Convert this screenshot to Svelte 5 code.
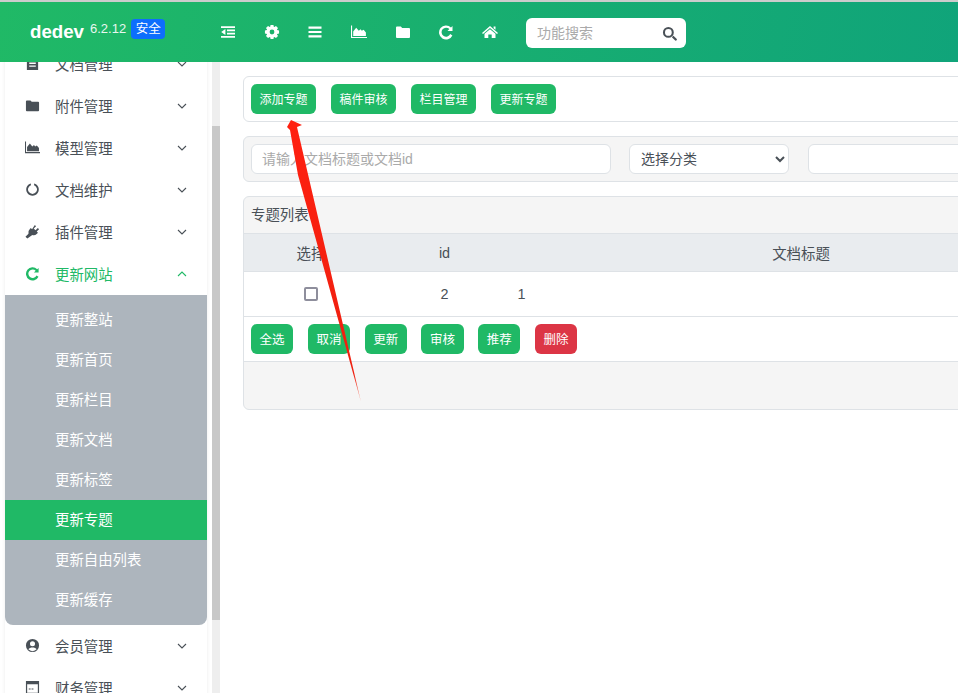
<script>
	const icons = {
		indent: 'M1 2.2h14v1.9H1z M7 5.6h8v1.6H7z M7 8.8h8v1.6H7z M1 11.9h14v1.9H1z M5.4 5v6L1.2 8z',
		cog: gear(),
		bars: 'M1.5 2.5h13v2.2h-13z M1.5 6.9h13v2.2h-13z M1.5 11.3h13v2.2h-13z',
		area: 'M0 1.5h1.1v11.4H16V14H0z M2.2 12V7.4l3-3.6 2.6 3 1.8-1.6 1.2 1.6 1.8-1 2.3 2.8V12z',
		folder: 'M1 3.6a1 1 0 0 1 1-1h3.8l1.4 1.5H14a1 1 0 0 1 1 1V13a1 1 0 0 1-1 1H2a1 1 0 0 1-1-1z',
		repeat: 'M14.5 2v5h-5l1.9-1.9A4.5 4.5 0 1 0 12.2 10l2.2 1.4A7 7 0 1 1 13 3.5z',
		home: 'M8 2 16 9l-1 1-7-6-7 6-1-1z M8 5.2l5.5 4.6V14H9.7v-3.4H6.3V14H2.5V9.8z M11.6 2.6h1.9v3.2l-1.9-1.6z',
		search: 'M6.8 1a5.8 5.8 0 1 1 0 11.6a5.8 5.8 0 1 1 0-11.6z M6.8 3.2a3.6 3.6 0 1 0 0 7.2a3.6 3.6 0 1 0 0-7.2z M10.5 12l1.7-1.7 3.3 3.3a1.2 1.2 0 0 1-1.7 1.7z',
		file: 'M2 1h12v14H2z M4.5 4v1.5h7V4z M4.5 7v1.5h7V7z M4.5 10v1.5h7V10z',
		notch: 'M6.3 1.5v1.9a4.8 4.8 0 1 0 3.4 0V1.5a6.7 6.7 0 1 1-3.4 0z',
		plug: 'M10.5 1l1.3 1.3-2.5 2.5 1.9 1.9 2.5-2.5 1.3 1.3-2.5 2.5 1.3 1.3-1 1q-2.5 2.5-5 1.5L2.5 15.5l-2-2 3.2-3.2q-1-2.5 1.5-5l1-1 1.3 1.3z',
		user: 'M8 1a7 7 0 1 1 0 14a7 7 0 1 1 0-14z M8 3.4a2.7 2.7 0 1 0 0 5.4a2.7 2.7 0 1 0 0-5.4z M3.6 12.1a6 6 0 0 0 8.8 0C11.6 10.6 10 10 8 10s-3.6.6-4.4 2.1z',
		card: 'M1 1h14v14H1z M2.3 4.6v9.1h11.4V4.6z M4 9h2v1.2H4z M7 9h2v1.2H7z'
	};

	const toolbar = ['indent', 'cog', 'bars', 'area', 'folder', 'repeat', 'home'];

	const menuTop = [
		{ icon: 'file', label: '文档管理' },
		{ icon: 'folder', label: '附件管理' },
		{ icon: 'area', label: '模型管理' },
		{ icon: 'notch', label: '文档维护' },
		{ icon: 'plug', label: '插件管理' }
	];
	const subMenu = ['更新整站', '更新首页', '更新栏目', '更新文档', '更新标签', '更新专题', '更新自由列表', '更新缓存'];
	const menuBottom = [
		{ icon: 'user', label: '会员管理' },
		{ icon: 'card', label: '财务管理' }
	];

	const topButtons = ['添加专题', '稿件审核', '栏目管理', '更新专题'];
	const rowButtons = ['全选', '取消', '更新', '审核', '推荐'];

	// gear outline with 8 teeth, plus the hole
	function gear() {
		let pts = [];
		for (let i = 0; i < 8; i++) {
			const a = (i * Math.PI) / 4;
			for (const [r, d] of [[5.4, -0.36], [7.2, -0.2], [7.2, 0.2], [5.4, 0.36]]) {
				pts.push((8 + r * Math.sin(a + d)).toFixed(2) + ' ' + (8 - r * Math.cos(a + d)).toFixed(2));
			}
		}
		return 'M' + pts.join('L') + 'z M8 5.6a2.4 2.4 0 1 0 0 4.8a2.4 2.4 0 1 0 0-4.8z';
	}
</script>

{#snippet icon(name)}
	<svg class="icon" viewBox="0 0 16 16"><path fill-rule="evenodd" d={icons[name]} /></svg>
{/snippet}

{#snippet menuItem(item)}
	<div class="menu-item">
		{@render icon(item.icon)}
		<span>{item.label}</span>
		<svg class="chev" viewBox="0 0 10 6"><path d="M1 1l4 4 4-4" /></svg>
	</div>
{/snippet}

<div class="page">
	<header class="topbar">
		<div class="brand">
			<b>dedev</b>
			<span class="version">6.2.12</span>
			<span class="badge">安全</span>
		</div>
		<div class="tools">
			{#each toolbar as name}
				{@render icon(name)}
			{/each}
		</div>
		<div class="search">
			<input placeholder="功能搜索" />
			{@render icon('search')}
		</div>
	</header>

	<div class="layout">
		<aside class="sidebar">
			<nav class="menu">
				{#each menuTop as item}
					{@render menuItem(item)}
				{/each}
				<div class="menu-item open">
					{@render icon('repeat')}
					<span>更新网站</span>
					<svg class="chev" viewBox="0 0 10 6"><path d="M1 5l4-4 4 4" /></svg>
				</div>
				<div class="submenu">
					{#each subMenu as label}
						<div class="sub-item" class:active={label === '更新专题'}>{label}</div>
					{/each}
				</div>
				{#each menuBottom as item}
					{@render menuItem(item)}
				{/each}
			</nav>
			<div class="scrollbar"><div class="thumb"></div></div>
		</aside>

		<main class="main">
			<div class="content">
				<section class="card plain">
					{#each topButtons as label}
						<button class="btn">{label}</button>
					{/each}
				</section>

				<section class="card filter">
					<input class="field keyword" placeholder="请输入文档标题或文档id" />
					<select class="field category">
						<option>选择分类</option>
					</select>
					<input class="field extra" />
				</section>

				<section class="card list">
					<div class="list-title">专题列表</div>
					<table>
						<colgroup>
							<col style="width: 134px" />
							<col style="width: 133px" />
							<col style="width: 21px" />
							<col />
						</colgroup>
						<thead>
							<tr>
								<th>选择</th>
								<th>id</th>
								<th colspan="2">文档标题</th>
							</tr>
						</thead>
						<tbody>
							<tr>
								<td><input class="check" type="checkbox" /></td>
								<td>2</td>
								<td>1</td>
								<td></td>
							</tr>
						</tbody>
					</table>
					<div class="actions">
						{#each rowButtons as label}
							<button class="btn">{label}</button>
						{/each}
						<button class="btn danger">删除</button>
					</div>
					<div class="list-foot"></div>
				</section>
			</div>
		</main>
	</div>

	<svg class="arrow" viewBox="0 0 958 693">
		<defs>
			<linearGradient id="fade" x1="0" y1="0" x2="0" y2="1">
				<stop offset="0" stop-color="#ff2010" />
				<stop offset="0.9" stop-color="#ee2010" />
				<stop offset="1" stop-color="#f8a090" />
			</linearGradient>
		</defs>
		<polygon fill="url(#fade)" points="291,120 302,125 297,127 361,402 298,175 290,130 287,127" />
	</svg>
</div>

<style>
	:global(body) {
		background: #fff;
	}

	.page {
		position: relative;
		display: flex;
		flex-direction: column;
		height: 693px;
		overflow: hidden;
		border-top: 2px solid #ccc;
		box-sizing: border-box;
		font-family: "Liberation Sans", "Noto Sans CJK SC", sans-serif;
		font-size: 14.4px;
		color: #495057;
	}

	.topbar {
		position: relative;
		z-index: 2;
		display: flex;
		align-items: center;
		flex: none;
		height: 60px;
		background: linear-gradient(100deg, #20b966, #10a47a);
		color: #fff;
	}

	.brand {
		display: flex;
		align-items: center;
		width: 190px;
		padding-left: 30px;
		margin-top: -3px;
	}

	.brand b {
		font-size: 18.7px;
		line-height: 20px;
		margin-top: 2px;
	}

	.version {
		font-size: 13px;
		margin-left: 6px;
		margin-top: -4px;
		opacity: 0.9;
	}

	.badge {
		margin-left: 5px;
		margin-top: -4px;
		width: 34px;
		height: 20px;
		border-radius: 4px;
		background: #0d6efd;
		font-size: 12.5px;
		line-height: 20px;
		text-align: center;
	}

	.icon {
		width: 15px;
		height: 15px;
		flex: none;
		fill: currentColor;
	}

	.tools {
		display: flex;
		align-items: center;
		gap: 27.7px;
		width: 306px;
	}

	.tools .icon {
		width: 16px;
		height: 16px;
	}

	.search {
		display: flex;
		align-items: center;
		box-sizing: border-box;
		width: 160px;
		height: 30px;
		margin-top: 2px;
		padding: 0 9px 0 11px;
		border-radius: 6px;
		background: #fff;
		color: #495057;
	}

	.search input {
		flex: 1;
		min-width: 0;
		padding: 0;
		border: 0;
		outline: 0;
		font: inherit;
		font-size: 14px;
	}

	input::placeholder {
		color: #aaa;
	}

	.layout {
		display: flex;
		flex: 1;
		min-height: 0;
	}

	.sidebar {
		display: flex;
		flex: none;
		width: 220px;
		overflow: hidden;
	}

	.menu {
		flex: none;
		width: 202px;
		height: 700px;
		margin: -19px 5px 0;
		background: #fff;
		box-shadow: 0 0 4px rgba(0, 0, 0, 0.08);
	}

	.menu-item {
		display: flex;
		align-items: center;
		gap: 15px;
		box-sizing: border-box;
		height: 42px;
		padding: 0 20px 2px 20px;
	}

	.menu-item .chev {
		margin: 2px 0 0 auto;
	}

	.chev {
		width: 10px;
		height: 6px;
		fill: none;
		stroke: currentColor;
		stroke-width: 1.1;
	}

	.menu-item.open {
		color: #20b966;
	}

	.submenu {
		padding: 5px 0;
		border-radius: 0 0 8px 8px;
		background: #adb5bd;
		color: #fff;
	}

	.sub-item {
		height: 40px;
		padding-left: 50px;
		line-height: 40px;
	}

	.sub-item.active {
		background: #20b966;
	}

	.scrollbar {
		flex: none;
		width: 8px;
		background: #eee;
	}

	.thumb {
		height: 494px;
		margin-top: 64px;
		background: #c8c8c8;
	}

	.main {
		flex: 1;
		min-width: 0;
		overflow: hidden;
	}

	.content {
		display: flex;
		flex-direction: column;
		gap: 14px;
		width: 849px;
		padding: 14px 0 0 23px;
	}

	.card {
		box-sizing: border-box;
		border: 1px solid #dee2e6;
		border-radius: 6px;
	}

	.plain,
	.filter {
		display: flex;
		padding: 7px;
	}

	.plain {
		gap: 14.8px;
		background: #fff;
	}

	.filter {
		background: #f5f5f5;
	}

	.btn {
		height: 30px;
		padding: 0 8.6px 2px;
		border: 0;
		border-radius: 6px;
		background: #20b966;
		color: #fff;
		font: inherit;
		font-size: 12px;
	}

	.btn.danger {
		background: #dc3545;
	}

	.field {
		box-sizing: border-box;
		height: 30px;
		border: 1px solid #dee2e6;
		border-radius: 6px;
		outline: 0;
		background: #fff;
		color: #495057;
		font: inherit;
		font-size: 14px;
	}

	.keyword {
		width: 360px;
		padding: 0 10px;
	}

	.category {
		width: 160px;
		margin-left: 18px;
		padding: 0 7px;
	}

	.extra {
		width: 200px;
		margin-left: 19px;
	}

	.list {
		overflow: hidden;
		background: #f5f5f5;
	}

	.list-title {
		height: 36px;
		padding-left: 7px;
		line-height: 36px;
	}

	table {
		width: 100%;
		border-collapse: collapse;
		table-layout: fixed;
		background: #fff;
	}

	th {
		height: 38px;
		padding: 0;
		box-sizing: border-box;
		background: #e9ecef;
		font-weight: 400;
		border-top: 1px solid #dee2e6;
		border-bottom: 1px solid #dee2e6;
	}

	td {
		height: 44px;
		padding: 0;
		text-align: center;
	}

	.check {
		appearance: none;
		display: block;
		box-sizing: border-box;
		width: 14px;
		height: 14px;
		margin: 0 auto;
		border: 2px solid #8e8e9c;
		border-radius: 2px;
	}

	.actions {
		display: flex;
		gap: 14.6px;
		height: 46px;
		box-sizing: border-box;
		padding: 7px;
		background: #fff;
		border-top: 1px solid #dee2e6;
		border-bottom: 1px solid #dee2e6;
	}

	.actions .btn {
		font-size: 12.5px;
	}

	.list-foot {
		height: 47px;
	}

	.arrow {
		position: absolute;
		z-index: 3;
		left: 0;
		top: -2px;
		width: 958px;
		height: 693px;
		pointer-events: none;
	}
</style>
